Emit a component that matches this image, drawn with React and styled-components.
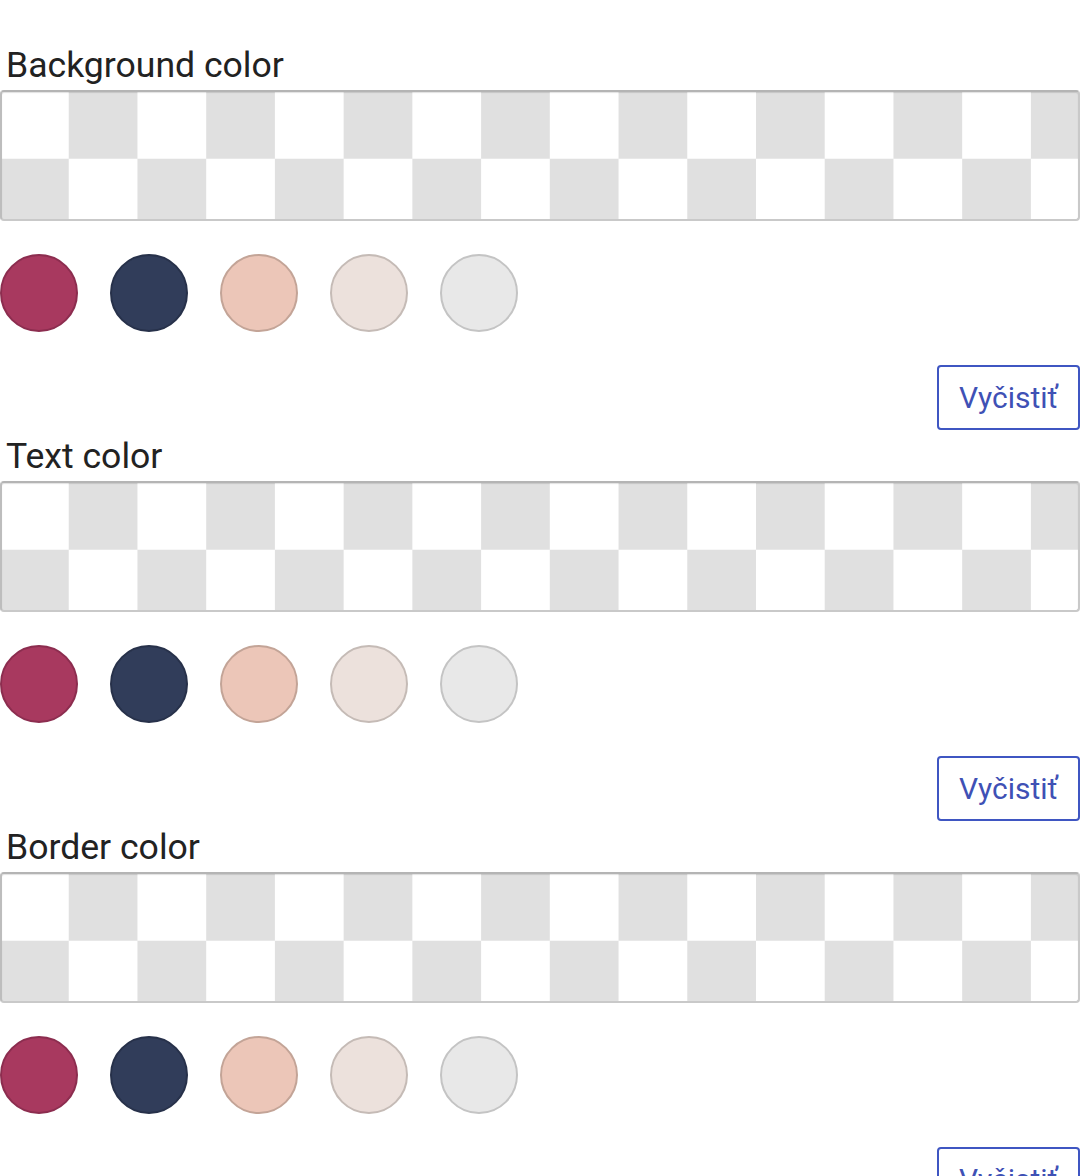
import React from 'react'
import styled, { createGlobalStyle } from 'styled-components'

const GlobalStyle = createGlobalStyle`
 body {
  margin: 0;
  background: #ffffff;
  font-family: Roboto, "Liberation Sans", sans-serif;
  color: #212121;
 }
`

const Page = styled.div`
 display: flex;
 flex-direction: column;
 padding-top: 46px;
 width: 1080px;
`

const Section = styled.section`
 display: flex;
 flex-direction: column;
`

const Label = styled.div`
 font-size: 35.6px;
 line-height: 38px;
 margin-left: 6px;
 color: #222222;
`

const Preview = styled.div`
 margin-top: 6px;
 height: 131px;
 box-sizing: border-box;
 border: 2px solid #c9c9c9;
 border-top-color: #b4b4b4;
 border-left-color: #bdbdbd;
 border-radius: 4px;
 background-color: #ffffff;
 background-image: repeating-conic-gradient(#e0e0e0 0 25%, #ffffff 0 50%);
 background-size: 137.46px 137.46px;
 background-origin: border-box;
 background-position: 0 0;
 box-shadow: inset 0 1px 1px rgba(0,0,0,0.12);
`

const Swatches = styled.div`
 display: flex;
 gap: 32px;
 margin-top: 33px;
`

const Swatch = styled.button`
 width: 78px;
 height: 78px;
 padding: 0;
 border-radius: 50%;
 box-sizing: border-box;
 border: 2px solid ${p => p.$edge};
 background: ${p => p.$fill};
 cursor: pointer;
`

const Actions = styled.div`
 display: flex;
 justify-content: flex-end;
 margin-top: 33px;
 margin-bottom: 7px;
`

const ClearButton = styled.button`
 height: 65px;
 width: 143px;
 box-sizing: border-box;
 border: 2px solid #3f56c2;
 border-radius: 4px;
 background: #ffffff;
 color: #3f51b5;
 font-family: Roboto, "Liberation Sans", sans-serif;
 font-size: 30px;
 padding: 0;
 cursor: pointer;
`

const colors = [
 { fill: '#a8395f', edge: '#8c2d4f' },
 { fill: '#313d5a', edge: '#27314a' },
 { fill: '#ecc6b8', edge: '#c3a497' },
 { fill: '#ece1dc', edge: '#c5bbb6' },
 { fill: '#e8e8e8', edge: '#c4c4c4' },
]

const ColorField = ({ label }) => (
 <Section>
  <Label>{label}</Label>
  <Preview />
  <Swatches>
   {colors.map(c => <Swatch key={c.fill} $fill={c.fill} $edge={c.edge} />)}
  </Swatches>
  <Actions>
   <ClearButton>Vyčistiť</ClearButton>
  </Actions>
 </Section>
)

export default function App() {
 return (
  <Page>
   <GlobalStyle />
   <ColorField label="Background color" />
   <ColorField label="Text color" />
   <ColorField label="Border color" />
  </Page>
 )
}
